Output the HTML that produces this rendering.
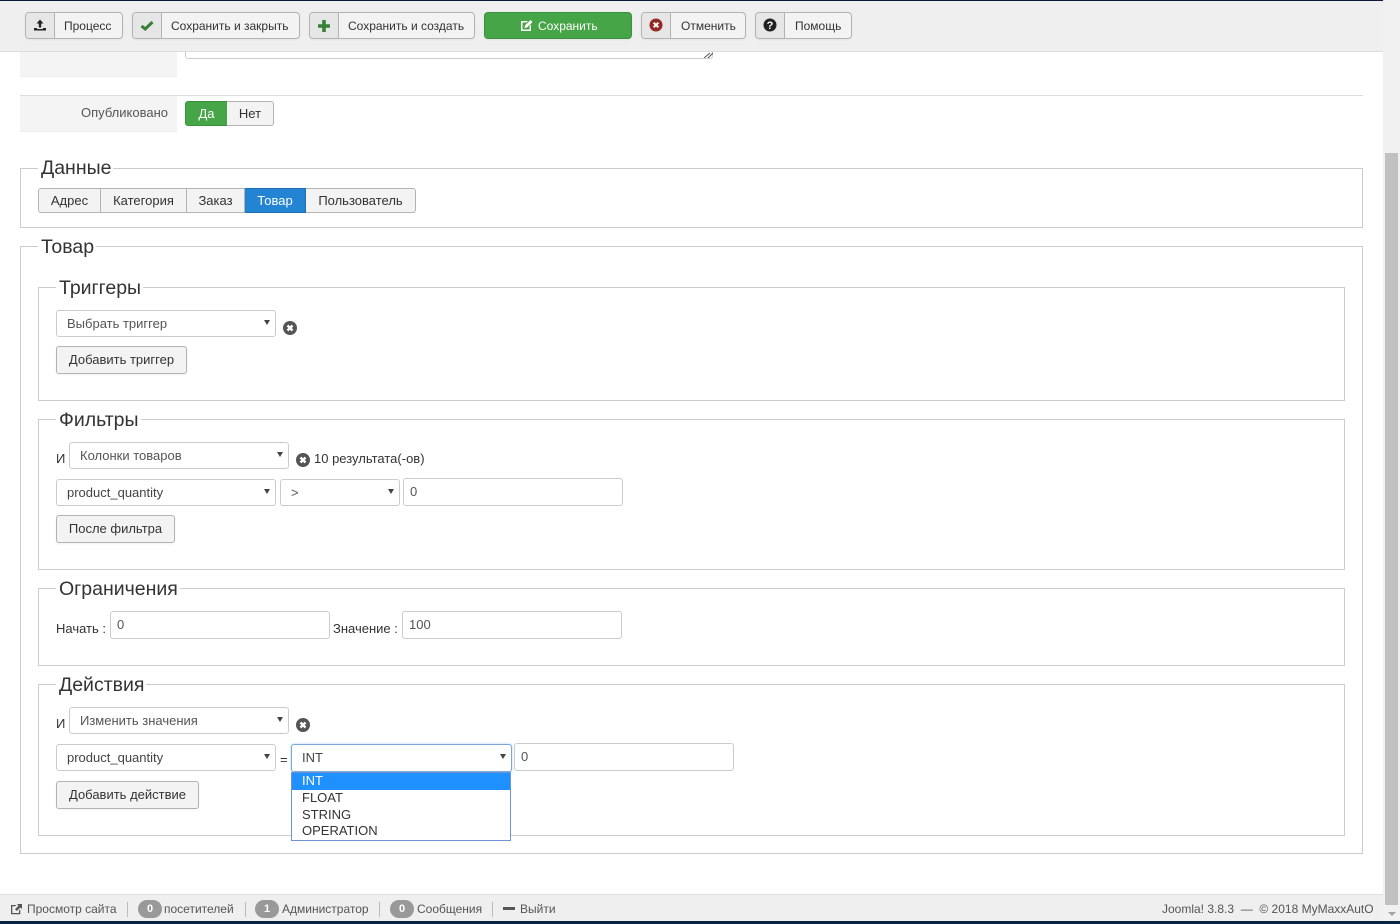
<!DOCTYPE html>
<html lang="ru"><head><meta charset="utf-8"><title>Товар</title>
<style>
html,body{margin:0;padding:0;width:1400px;height:924px;overflow:hidden;background:#fff}
body{position:relative;font:13px/18px "Liberation Sans",sans-serif;color:#333}
.a{position:absolute;box-sizing:border-box;white-space:nowrap}
.tb{height:27px;top:12px;border:1px solid #b3b3b3;border-radius:4px;background:#f3f3f3;color:#333;font-size:12px;line-height:27px;text-align:center;overflow:hidden;box-shadow:0 1px 2px rgba(0,0,0,.05)}
.tb .ic{position:absolute;left:0;top:0;width:29px;height:25px;background:#e6e6e6;border-right:1px solid #b3b3b3;box-sizing:border-box}
.tb .ic svg{position:absolute;left:6px;top:5px}
.fs{border:1px solid #ccc}
.lg{font-size:19.5px;line-height:22px;background:#fff;padding:0 2px 0 3px;color:#333}
.sel,.inp{height:27px;border:1px solid #ccc;border-radius:3px;background:#fff;color:#555;line-height:25px;padding-left:10px}
.inp{padding-left:6px;height:28px}
.sel:after{content:"";position:absolute;right:5px;top:9px;border-left:3.5px solid transparent;border-right:3.5px solid transparent;border-top:5px solid #444}
.btn{height:28px;border:1px solid #b3b3b3;border-radius:3px;background:#f3f3f3;color:#333;line-height:26px;text-align:center;box-shadow:0 1px 2px rgba(0,0,0,.05)}
.x{width:14px;height:14px}
.t{color:#333}
.bd{display:inline-block;position:absolute;top:900px;width:24px;height:18px;border-radius:9px;background:#999;color:#fff;font-weight:bold;font-size:11px;line-height:18px;text-align:center}
.sp{position:absolute;top:902px;width:1px;height:15px;background:#bbb}
.ft{color:#555;top:899px;line-height:20px;font-size:12px}
.tab{top:188px;height:25px;background:#f3f3f3;border:1px solid #b3b3b3;border-left:0;line-height:23px;text-align:center;color:#333}
</style></head><body>

<!-- page content -->
<div class="a" style="left:20px;top:52px;width:157px;height:25px;background:#f4f4f4;border-bottom:1px solid #eee"></div>
<div class="a" style="left:185px;top:45px;width:528px;height:14px;border:1px solid #ccc;border-radius:3px;background:#fff"></div>
<svg class="a" style="left:703px;top:52px" width="10" height="6"><path d="M1 6L7 1M5 6L10 1" stroke="#555" stroke-width="1" fill="none"/></svg>
<div class="a" style="left:20px;top:95px;width:1343px;height:1px;background:#ddd"></div>
<div class="a" style="left:20px;top:96px;width:157px;height:36px;background:#f4f4f4;border-bottom:1px solid #eee"></div>
<div class="a" style="left:20px;top:104px;width:148px;text-align:right;color:#555">Опубликовано</div>
<div class="a" style="left:185px;top:101px;width:43px;height:25px;background:#46a546;border:1px solid #3c8f3c;border-radius:3px 0 0 3px;color:#fff;text-align:center;line-height:24px;font-weight:400">Да</div>
<div class="a" style="left:227px;top:101px;width:47px;height:25px;background:#f3f3f3;border:1px solid #b3b3b3;border-left:0;border-radius:0 3px 3px 0;text-align:center;line-height:24px">Нет</div>

<!-- Данные -->
<div class="a fs" style="left:20px;top:168px;width:1343px;height:60px"></div>
<div class="a lg" style="left:38px;top:157px">Данные</div>
<div class="a tab" style="left:38px;width:63px;border-left:1px solid #b3b3b3;border-radius:3px 0 0 3px">Адрес</div>
<div class="a tab" style="left:101px;width:86px">Категория</div>
<div class="a tab" style="left:187px;width:58px">Заказ</div>
<div class="a tab" style="left:245px;width:61px;background:#2384d3;border-color:#1a6fb5;color:#fff">Товар</div>
<div class="a tab" style="left:306px;width:110px;border-radius:0 3px 3px 0">Пользователь</div>

<!-- Товар -->
<div class="a fs" style="left:20px;top:246px;width:1343px;height:608px"></div>
<div class="a lg" style="left:38px;top:236px">Товар</div>

<!-- Триггеры -->
<div class="a fs" style="left:38px;top:287px;width:1307px;height:114px"></div>
<div class="a lg" style="left:56px;top:277px">Триггеры</div>
<div class="a sel" style="left:56px;top:310px;width:220px">Выбрать триггер</div>
<svg class="a x" style="left:283px;top:321px" viewBox="0 0 14 14"><circle cx="7" cy="7" r="7" fill="#555"/><path d="M4.5 4.5L9.5 9.5M9.5 4.5L4.5 9.5" stroke="#fff" stroke-width="2.4"/></svg>
<div class="a btn" style="left:56px;top:346px;width:131px">Добавить триггер</div>

<!-- Фильтры -->
<div class="a fs" style="left:38px;top:419px;width:1307px;height:151px"></div>
<div class="a lg" style="left:56px;top:409px">Фильтры</div>
<div class="a t" style="left:56px;top:450px;font-size:13px">И</div>
<div class="a sel" style="left:69px;top:442px;width:220px">Колонки товаров</div>
<svg class="a x" style="left:296px;top:453px" viewBox="0 0 14 14"><circle cx="7" cy="7" r="7" fill="#555"/><path d="M4.5 4.5L9.5 9.5M9.5 4.5L4.5 9.5" stroke="#fff" stroke-width="2.4"/></svg>
<div class="a t" style="left:314px;top:450px">10 результата(-ов)</div>
<div class="a sel" style="left:56px;top:479px;width:220px;color:#444">product_quantity</div>
<div class="a sel" style="left:280px;top:479px;width:120px">&gt;</div>
<div class="a inp" style="left:403px;top:478px;width:220px">0</div>
<div class="a btn" style="left:56px;top:515px;width:119px">После фильтра</div>

<!-- Ограничения -->
<div class="a fs" style="left:38px;top:588px;width:1307px;height:78px"></div>
<div class="a lg" style="left:56px;top:578px">Ограничения</div>
<div class="a t" style="left:56px;top:620px">Начать :</div>
<div class="a inp" style="left:110px;top:611px;width:220px">0</div>
<div class="a t" style="left:333px;top:620px">Значение :</div>
<div class="a inp" style="left:402px;top:611px;width:220px">100</div>

<!-- Действия -->
<div class="a fs" style="left:38px;top:684px;width:1307px;height:152px"></div>
<div class="a lg" style="left:56px;top:674px">Действия</div>
<div class="a t" style="left:56px;top:715px;font-size:13px">И</div>
<div class="a sel" style="left:69px;top:707px;width:220px">Изменить значения</div>
<svg class="a x" style="left:296px;top:718px" viewBox="0 0 14 14"><circle cx="7" cy="7" r="7" fill="#555"/><path d="M4.5 4.5L9.5 9.5M9.5 4.5L4.5 9.5" stroke="#fff" stroke-width="2.4"/></svg>
<div class="a sel" style="left:56px;top:744px;width:220px;color:#444">product_quantity</div>
<div class="a t" style="left:280px;top:751px">=</div>
<div class="a sel" style="left:291px;top:744px;width:221px;height:28px;border-color:#7da7d9;box-shadow:0 0 2px rgba(82,168,236,.5);line-height:26px;color:#444">INT</div>
<div class="a inp" style="left:514px;top:743px;width:220px">0</div>
<div class="a btn" style="left:56px;top:781px;width:143px">Добавить действие</div>
<div class="a" style="left:291px;top:772px;width:220px;height:69px;border:1px solid #6e93d6;background:#fff;font-size:13px;line-height:16.5px;color:#333">
<div style="background:#1e90ff;color:#fff;padding-left:10px;height:17px">INT</div>
<div style="padding-left:10px">FLOAT</div>
<div style="padding-left:10px">STRING</div>
<div style="padding-left:10px">OPERATION</div>
</div>

<!-- toolbar -->
<div class="a" style="left:0;top:0;width:1383px;height:52px;background:#efefef;border-bottom:1px solid #ddd"></div>
<div class="a" style="left:0;top:0;width:1383px;height:1px;background:#0b1b3a"></div>

<div class="a tb" style="left:25px;width:98px"><span class="ic"><svg width="16" height="16" viewBox="0 0 16 16"><path d="M8 1.5L11.5 5.5H9.2V9.5H6.8V5.5H4.5Z" fill="#222"/><path d="M2 10H5V11H11V10H14V12.5H2Z" fill="#222"/></svg></span><span class="a" style="left:38px">Процесс</span></div>
<div class="a tb" style="left:132px;width:168px"><span class="ic"><svg width="16" height="16" viewBox="0 0 16 16"><path d="M2.5 8L6.2 11L13.5 4" stroke="#378137" stroke-width="3" fill="none"/></svg></span><span class="a" style="left:38px">Сохранить и закрыть</span></div>
<div class="a tb" style="left:309px;width:166px"><span class="ic"><svg width="16" height="16" viewBox="0 0 16 16"><path d="M6.2 2H9.8V6.2H14V9.8H9.8V14H6.2V9.8H2V6.2H6.2Z" fill="#378137"/></svg></span><span class="a" style="left:38px">Сохранить и создать</span></div>
<div class="a tb" style="left:484px;width:148px;background:#46a546;border-color:#3c8f3c;color:#fff"><svg class="a" style="left:35px;top:6px" width="13" height="13" viewBox="0 0 13 13"><path d="M1 2H8L6.5 3.5H2.5V10.5H9.5V7L11 5.5V12H1Z" fill="#fff"/><path d="M5 6.5L10.5 1L12.5 3L7 8.5L4.5 9Z" fill="#fff"/></svg><span class="a" style="left:53px">Сохранить</span></div>
<div class="a tb" style="left:641px;width:105px"><span class="ic"><svg width="16" height="16" viewBox="0 0 16 16"><circle cx="8" cy="7" r="6.5" fill="#942a25"/><path d="M5.7 4.7L10.3 9.3M10.3 4.7L5.7 9.3" stroke="#fff" stroke-width="2"/></svg></span><span class="a" style="left:39px">Отменить</span></div>
<div class="a tb" style="left:755px;width:97px"><span class="ic"><svg width="16" height="16" viewBox="0 0 16 16"><circle cx="8" cy="7" r="6.5" fill="#222"/><text x="8" y="11" text-anchor="middle" font-family="Liberation Sans,sans-serif" font-size="11" font-weight="bold" fill="#fff">?</text></svg></span><span class="a" style="left:39px">Помощь</span></div>

<!-- status bar -->
<div class="a" style="left:0;top:894px;width:1383px;height:27px;background:#efefef;border-top:1px solid #e0e0e0"></div>
<div class="a" style="left:0;top:921px;width:1400px;height:3px;background:#0b2245"></div>
<svg class="a" style="left:10px;top:903px" width="13" height="12" viewBox="0 0 13 12"><path d="M1 2H6.5L5.2 3.3H2.3V10H9V7.5L10.3 6.2V11.3H1Z" fill="#555"/><path d="M7 1H12V6L10.3 4.5L6.8 8L5 6.2L8.5 2.7Z" fill="#555"/></svg>
<div class="a ft" style="left:27px">Просмотр сайта</div>
<div class="sp" style="left:127px"></div>
<div class="bd" style="left:138px">0</div>
<div class="a ft" style="left:164px">посетителей</div>
<div class="sp" style="left:245px"></div>
<div class="bd" style="left:255px">1</div>
<div class="a ft" style="left:282px">Администратор</div>
<div class="sp" style="left:379px"></div>
<div class="bd" style="left:390px">0</div>
<div class="a ft" style="left:417px">Сообщения</div>
<div class="sp" style="left:492px"></div>
<div class="a" style="left:503px;top:907px;width:12px;height:3px;background:#555"></div>
<div class="a ft" style="left:520px">Выйти</div>
<div class="a ft" style="left:1162px">Joomla! 3.8.3 &nbsp;— &nbsp;© 2018 MyMaxxAutO</div>

<!-- scrollbar -->
<div class="a" style="left:1383px;top:0;width:17px;height:921px;background:#f1f1f1"></div>
<div class="a" style="left:1385px;top:153px;width:13px;height:752px;background:#c1c1c1"></div>
<div class="a" style="left:1388px;top:912px;border-left:4px solid transparent;border-right:4px solid transparent;border-top:4px solid #a3a3a3"></div>
</body></html>
